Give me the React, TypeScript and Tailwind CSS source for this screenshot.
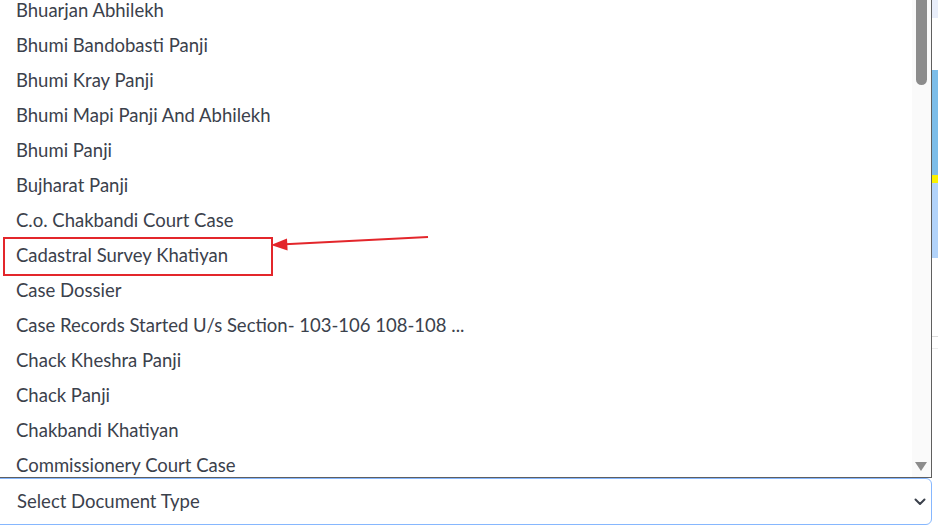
import React from "react";

const ITEMS = [
  "Bhuarjan Abhilekh",
  "Bhumi Bandobasti Panji",
  "Bhumi Kray Panji",
  "Bhumi Mapi Panji And Abhilekh",
  "Bhumi Panji",
  "Bujharat Panji",
  "C.o. Chakbandi Court Case",
  "Cadastral Survey Khatiyan",
  "Case Dossier",
  "Case Records Started U/s Section- 103-106 108-108 ...",
  "Chack Kheshra Panji",
  "Chack Panji",
  "Chakbandi Khatiyan",
  "Commissionery Court Case",
];

function Arrow() {
  return (
    <svg className="absolute left-0 top-0 pointer-events-none" width="440" height="260" viewBox="0 0 440 260">
      <line x1="428" y1="237" x2="285" y2="244.3" stroke="#e3262b" strokeWidth="2" />
      <polygon points="271,245 287,238.5 287.6,250.5" fill="#e3262b" />
    </svg>
  );
}

export default function App() {
  return (
    <div
      className="relative w-[938px] h-[527px] overflow-hidden bg-white flex"
      style={{ fontFamily: "Lato, 'Noto Sans', sans-serif" }}
    >
      <div className="w-[932px] flex flex-col">
        {/* open listbox */}
        <div className="relative h-[478px] flex border-r border-b border-[#5f5f5f] overflow-hidden">
          <div className="flex-1 -mt-[7px]">
            {ITEMS.map((t) => (
              <div key={t} className="h-[35px] flex items-center pl-[16px] text-[18.5px] text-[#3b414c] whitespace-nowrap">
                {t}
              </div>
            ))}
          </div>
          <div className="w-[19px] bg-[#fafafa] relative">
            <div className="absolute left-[4px] top-0 w-[11px] h-[85px] bg-[#8c8c8c] rounded-b-full" />
            <div className="absolute left-[3px] top-[462px] w-0 h-0 border-l-[6px] border-r-[6px] border-t-[9px] border-l-transparent border-r-transparent border-t-[#8c8c8c]" />
          </div>
          <div className="absolute left-[3px] top-[237px] w-[270px] h-[39px] border-2 border-[#e3262b]" />
          <Arrow />
        </div>
        {/* select */}
        <div className="h-[47px] -ml-[8px] flex items-center justify-between pl-[24px] pr-[5px] pt-px border border-[#86b7fe] rounded-[6px] text-[18.5px] text-[#3b414c]">
          <span>Select Document Type</span>
          <svg width="12" height="8" viewBox="0 0 12 8">
            <path d="M1.5 1.5 L6 6 L10.5 1.5" fill="none" stroke="#3b414c" strokeWidth="2" strokeLinecap="round" strokeLinejoin="round" />
          </svg>
        </div>
      </div>
      {/* page behind */}
      <div className="flex-1 flex flex-col">
        <div className="h-[18px] bg-[#e9eefa]" />
        <div className="h-[52px] bg-white" />
        <div className="h-[105px] bg-[#7dbde8]" />
        <div className="h-[8px] bg-[#fbf200]" />
        <div className="h-[75px] bg-[#b2d3fa]" />
        <div className="h-[78px] bg-white" />
        <div className="h-px bg-[#dcdcdc]" />
        <div className="h-[11px] bg-white" />
        <div className="h-px bg-[#ececec]" />
      </div>
    </div>
  );
}
